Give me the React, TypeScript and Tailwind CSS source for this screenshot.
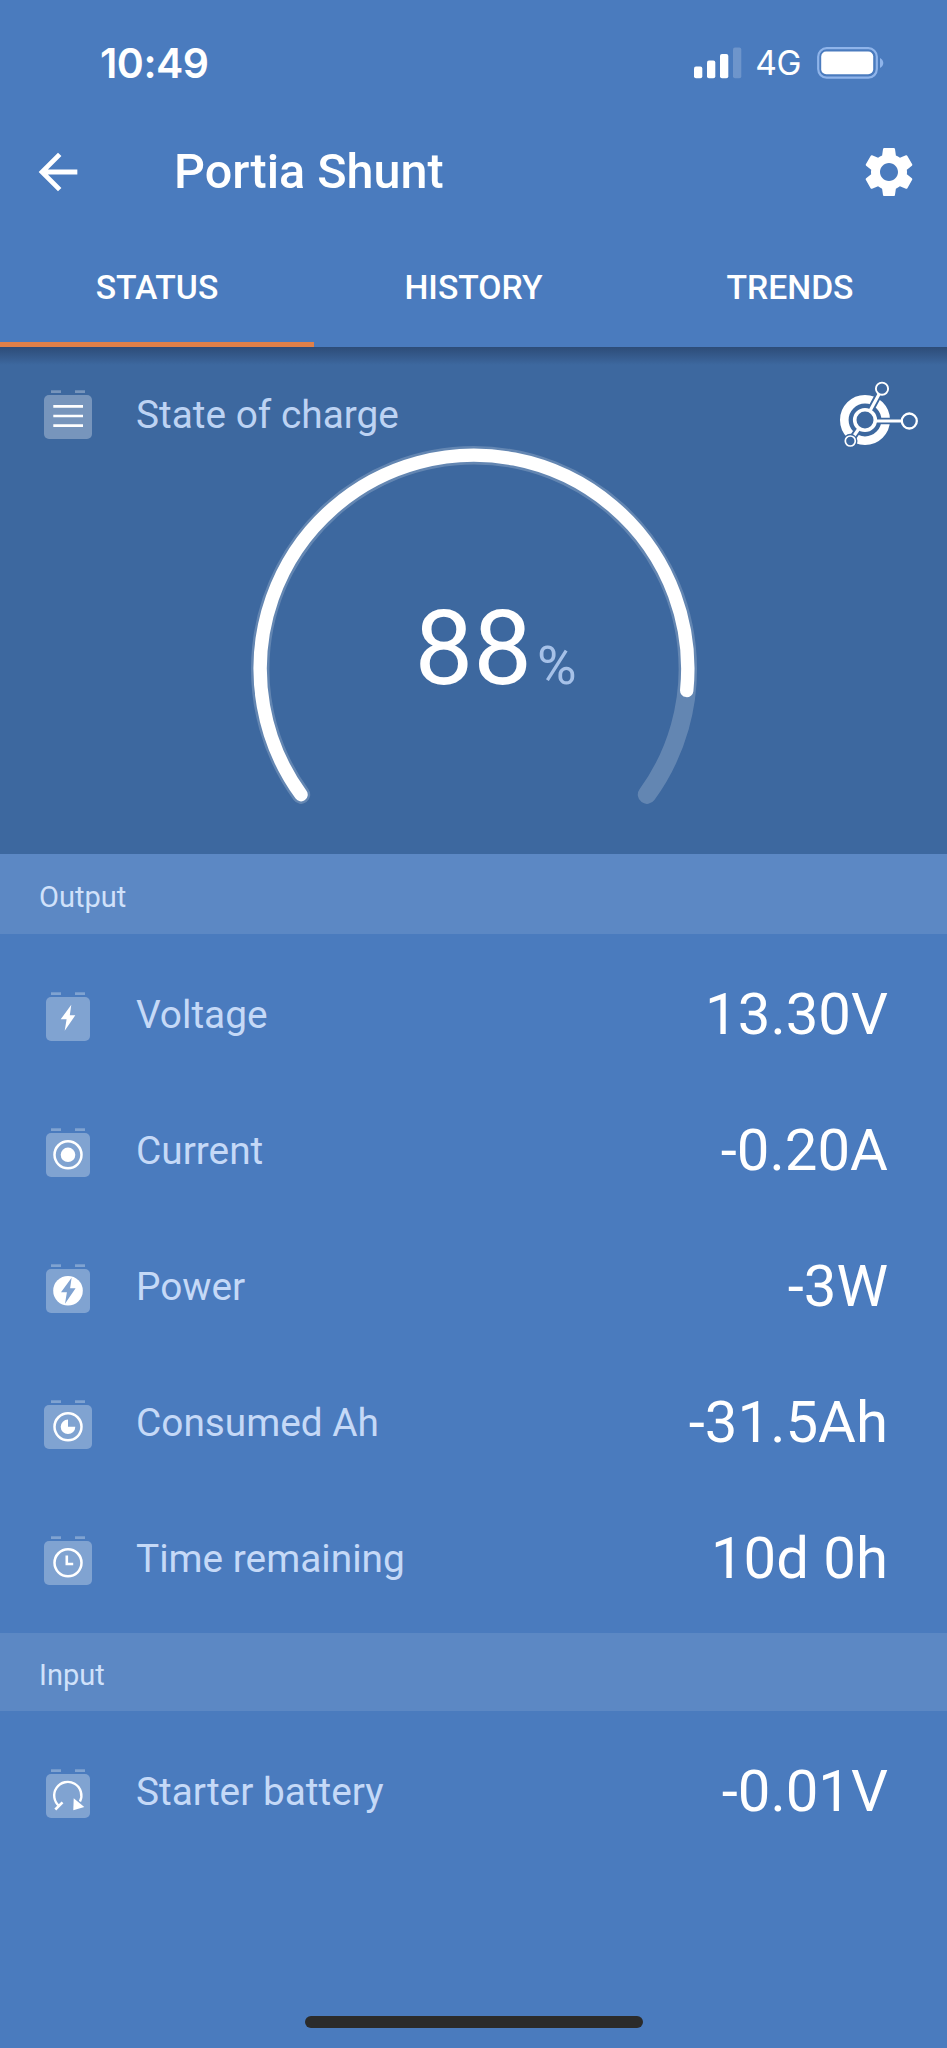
import React from 'react';
import { MdArrowBack, MdSettings } from 'react-icons/md';

type IconName = 'soc' | 'voltage' | 'current' | 'power' | 'consumed' | 'time' | 'starter';

interface Reading {
  icon: IconName;
  label: string;
  value: string;
}

const outputReadings: Reading[] = [
  { icon: 'voltage', label: 'Voltage', value: '13.30V' },
  { icon: 'current', label: 'Current', value: '-0.20A' },
  { icon: 'power', label: 'Power', value: '-3W' },
  { icon: 'consumed', label: 'Consumed Ah', value: '-31.5Ah' },
  { icon: 'time', label: 'Time remaining', value: '10d 0h' }
];

const inputReadings: Reading[] = [
  { icon: 'starter', label: 'Starter battery', value: '-0.01V' }
];

const wideIcons: IconName[] = ['soc', 'consumed', 'time'];

const BOLT = 'M27.3 13.7 L16.7 28.3 H22.6 L20.7 39.7 L31.3 24.3 H25.8 Z';

function BatteryIcon({ name }: { name: IconName }) {
  const wide = wideIcons.includes(name);

  return (
    <svg width="48" height="50" viewBox="0 0 48 50" fill="none" className="shrink-0">
      <g fill="#fff" fillOpacity="0.3">
        <rect x="7" y="1.3" width="10" height="2.7" />
        <rect x="31" y="1.3" width="10" height="2.7" />
        <rect x={wide ? 0 : 2} y="6" width={wide ? 48 : 44} height="44" rx="5" />
      </g>
      {name === 'soc' && (
        <path d="M9.3 17.3H39M9.3 27H39M9.3 36.7H39" stroke="#fff" strokeWidth="2.7" />
      )}
      {name === 'voltage' && <path d={BOLT} fill="#fff" />}
      {name === 'power' && (
        <>
          <circle cx="24" cy="27.8" r="14.8" fill="#fff" />
          <path d={BOLT} transform="translate(0.3 1)" fill="#7fa2d1" />
        </>
      )}
      {(name === 'current' || name === 'consumed' || name === 'time') && (
        <circle cx="24" cy="27.8" r="13.5" stroke="#fff" strokeWidth="2.5" />
      )}
      {name === 'current' && <circle cx="24" cy="27.8" r="7.3" fill="#fff" />}
      {name === 'consumed' && (
        <path d="M24 27.8V20.5A7.3 7.3 0 1 0 31.3 27.8Z" fill="#fff" />
      )}
      {name === 'time' && <path d="M22.8 20.5V29H29.2" stroke="#fff" strokeWidth="2.6" />}
      {name === 'starter' && (
        <>
          <path d="M15.4 38.2A13.6 13.6 0 1 1 36 33.5" stroke="#fff" strokeWidth="2.4" />
          <path d="M11.3 41.5L18.5 34.3" stroke="#fff" strokeWidth="2.6" />
          <path d="M29.7 30.3L40.3 39L29.3 42.3Z" fill="#fff" />
        </>
      )}
    </svg>
  );
}

function ConnectIcon() {
  return (
    <svg width="82" height="72" viewBox="0 0 82 72" fill="none" className="shrink-0">
      <circle cx="27" cy="40" r="20.7" stroke="#fff" strokeWidth="8.6" />
      <path d="M27 40L44 8.7M27 40L12.3 61" stroke="#3d689f" strokeWidth="7" />
      <path d="M27 41H71" stroke="#3d689f" strokeWidth="6.5" />
      <path d="M27 40L44 8.7M27 40L12.3 61" stroke="#fff" strokeWidth="3.2" />
      <path d="M27 41H71" stroke="#fff" strokeWidth="3.2" />
      <circle cx="12.3" cy="61" r="7.2" fill="#3d689f" />
      <g fill="#3d689f" stroke="#fff">
        <circle cx="27" cy="40" r="10.3" strokeWidth="3.6" />
        <circle cx="44" cy="8.7" r="6.1" strokeWidth="1.9" />
        <circle cx="71.3" cy="41" r="7.5" strokeWidth="2.3" />
        <circle cx="12.3" cy="61" r="5" strokeWidth="1.7" />
      </g>
    </svg>
  );
}

const RADIUS = 213.8;
const CENTER = 224;
const START = 144;
const SWEEP = 252;

function arc(percent: number) {
  const point = (deg: number) => {
    const rad = (deg * Math.PI) / 180;
    return `${CENTER + RADIUS * Math.cos(rad)} ${CENTER + RADIUS * Math.sin(rad)}`;
  };
  const sweep = (SWEEP * percent) / 100;
  return `M${point(START)} A${RADIUS} ${RADIUS} 0 ${sweep > 180 ? 1 : 0} 1 ${point(START + sweep)}`;
}

function Gauge({ percent }: { percent: number }) {
  return (
    <div className="grid w-[448px] h-[364px]">
      <svg
        width="448"
        height="364"
        viewBox="0 0 448 364"
        fill="none"
        strokeLinecap="round"
        className="col-start-1 row-start-1"
      >
        <path d={arc(100)} stroke="#fff" strokeOpacity="0.2" strokeWidth="18.4" />
        <path d={arc(percent)} stroke="#fff" strokeWidth="13.4" />
      </svg>
      <div className="col-start-1 row-start-1 flex items-baseline pl-[165px] pt-[144px] leading-[120px]">
        <span className="text-[104.5px]">{percent}</span>
        <span className="ml-[5px] text-[54px] text-[#a6c1e8]">%</span>
      </div>
    </div>
  );
}

function StatusBar() {
  return (
    <div className="flex h-[126px] items-center pl-[100px] pr-[63px] font-['Inter',sans-serif]">
      <span className="pt-[2px] text-[41px] font-semibold tracking-[-0.5px]">10:49</span>
      <svg width="48" height="32" viewBox="0 0 48 32" fill="#fff" className="ml-auto">
        <rect x="0" y="19.5" width="8.3" height="11.8" rx="2" />
        <rect x="13" y="13.5" width="8.3" height="17.8" rx="2" />
        <rect x="26" y="7" width="8.3" height="24.3" rx="2" />
        <rect x="39" y="0.5" width="8.3" height="30.8" rx="2" fillOpacity="0.2" />
      </svg>
      <span className="ml-[13px] pt-[2px] text-[33.5px] leading-none tracking-[-0.5px]">4G</span>
      <svg width="67" height="32" viewBox="0 0 67 32" fill="none" className="ml-[16px]">
        <rect x="1.2" y="1.2" width="58.6" height="29.4" rx="8.5" stroke="#8fb4ea" strokeWidth="2.2" />
        <rect x="4.2" y="4.6" width="52" height="22.6" rx="5" fill="#fff" />
        <path d="M63 11V21C65 20 66.3 18.3 66.3 16S65 12 63 11Z" fill="#8fb4ea" />
      </svg>
    </div>
  );
}

function SectionHeader({ title }: { title: string }) {
  return (
    <div className="flex items-center bg-[#5c88c4] pl-[39px] pt-[8px] h-full text-[29px] text-[#d0e1fa]">
      {title}
    </div>
  );
}

function ReadingRow({ icon, label, value }: Reading) {
  return (
    <div className="flex h-[136px] items-center pl-[44px] pr-[59px]">
      <BatteryIcon name={icon} />
      <span className="ml-[44px] text-[38.8px] leading-[46px] pb-[2px] text-[#c5d9f7]">{label}</span>
      <span className="ml-auto text-[58.1px] leading-[68px] pb-[4px]">{value}</span>
    </div>
  );
}

export default function App() {
  const tabs = ['STATUS', 'HISTORY', 'TRENDS'];
  const activeTab = 'STATUS';

  return (
    <div className="flex h-[2048px] w-[947px] flex-col overflow-hidden bg-[#4a7bbe] font-['Roboto',sans-serif] text-white">
      <header className="h-[347px] shrink-0">
        <StatusBar />
        <div className="flex h-[92px] items-center pl-[29px] pr-[28px]">
          <MdArrowBack size={58} />
          <h1 className="ml-[87px] text-[48.5px] font-medium">Portia Shunt</h1>
          <MdSettings size={60} className="ml-auto" />
        </div>
        <nav className="grid h-[129px] grid-cols-[314px_1fr_314px] text-[33.7px] font-medium">
          {tabs.map((tab) => (
            <button
              key={tab}
              className={`border-b-[5px] pt-[17px] ${
                tab === activeTab ? 'border-[#e08049]' : 'border-transparent'
              }`}
            >
              {tab}
            </button>
          ))}
        </nav>
      </header>

      <section className="h-[507px] shrink-0 bg-[#3d689f]">
        <div className="h-[18px] bg-linear-to-b from-[#2d4c78] to-[#3d689f]" />
        <div className="flex h-[80px] items-start pl-[44px] pr-[27px]">
          <div className="pt-[24px]">
            <BatteryIcon name="soc" />
          </div>
          <span className="ml-[44px] pt-[27px] text-[38.8px] leading-[46px] text-[#bdd3f3]">State of charge</span>
          <div className="ml-auto pt-[15px]">
            <ConnectIcon />
          </div>
        </div>
        <div className="flex justify-center">
          <Gauge percent={88} />
        </div>
      </section>

      <div className="h-[80px] shrink-0">
        <SectionHeader title="Output" />
      </div>
      <div className="pt-[14px] pb-[5px]">
        {outputReadings.map((reading) => (
          <ReadingRow key={reading.label} {...reading} />
        ))}
      </div>

      <div className="h-[78px] shrink-0">
        <SectionHeader title="Input" />
      </div>
      <div className="pt-[14px]">
        {inputReadings.map((reading) => (
          <ReadingRow key={reading.label} {...reading} />
        ))}
      </div>

      <div className="mx-auto mt-auto mb-[20px] h-[12px] w-[338px] rounded-full bg-[#2b2b2b]" />
    </div>
  );
}
